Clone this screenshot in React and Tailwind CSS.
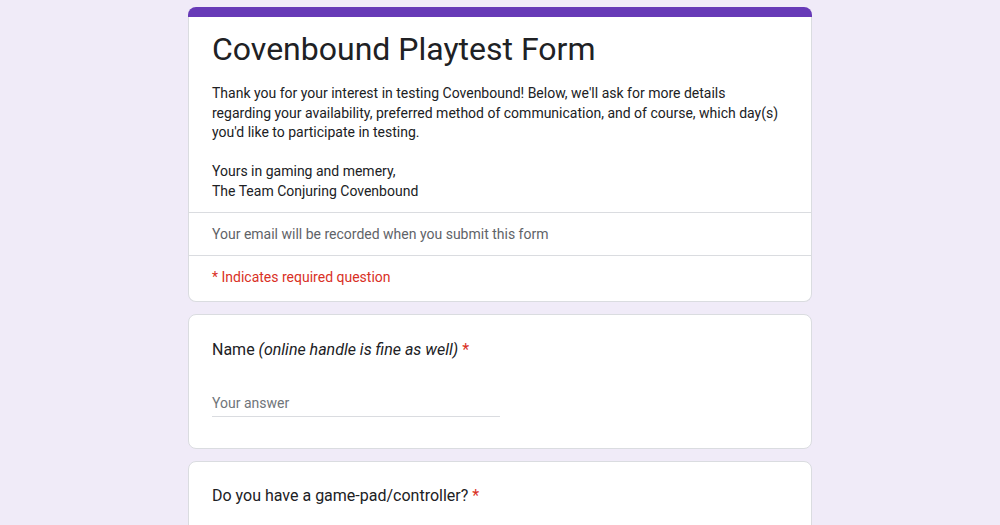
const Card = ({ children, className = "" }) => (
  <div className={`bg-white border border-[#dadce0] rounded-lg ${className}`}>
    {children}
  </div>
);

const Question = ({ children }) => (
  <p className="text-[16px] leading-6 text-[#202124]">
    {children}
    <span className="text-[#d93025] ml-1">*</span>
  </p>
);

const App = () => {
  return (
    <div
      className="min-h-screen bg-[#f0ebf8] pt-[7px] flex flex-col items-center gap-3"
      style={{ fontFamily: "Roboto, 'Liberation Sans', sans-serif" }}
    >
      <div className="w-[624px] flex flex-col">
        <div className="h-[10px] bg-[#673ab7] rounded-t-lg" />
        <div className="bg-white border border-t-0 border-[#dadce0] rounded-b-lg">
          <div className="px-[23px] pt-3 pb-[11px]">
            <h1 className="text-[32px] leading-10 text-[#202124]">
              Covenbound Playtest Form
            </h1>
            <div className="mt-[15px] text-[14px] leading-[19.5px] text-[#202124]">
              <p>
                Thank you for your interest in testing Covenbound! Below, we'll ask for more details
                <br />
                regarding your availability, preferred method of communication, and of course, which day(s)
                <br />
                you'd like to participate in testing.
              </p>
              <p className="h-[19.5px]" />
              <p>Yours in gaming and memery,</p>
              <p>The Team Conjuring Covenbound</p>
            </div>
          </div>
          <div className="border-t border-[#dadce0] px-[23px] h-[43px] flex items-center text-[14px] text-[#5f6368]">
            Your email will be recorded when you submit this form
          </div>
          <div className="border-t border-[#dadce0] px-[23px] pt-[11px] pb-[14px] text-[14px] leading-5 text-[#d93025]">
            * Indicates required question
          </div>
        </div>
      </div>

      <Card className="w-[624px] px-[23px] pt-[23px] pb-[31px]">
        <Question>
          Name <i>(online handle is fine as well)</i>
        </Question>
        <div className="mt-[31px] w-[288px] border-b border-[#dadce0] pb-[3px] text-[14px] leading-5 text-[#70757a]">
          Your answer
        </div>
      </Card>

      <Card className="w-[624px] px-[23px] pt-[22px] pb-10">
        <Question>Do you have a game-pad/controller?</Question>
      </Card>
    </div>
  );
};

export default App;
